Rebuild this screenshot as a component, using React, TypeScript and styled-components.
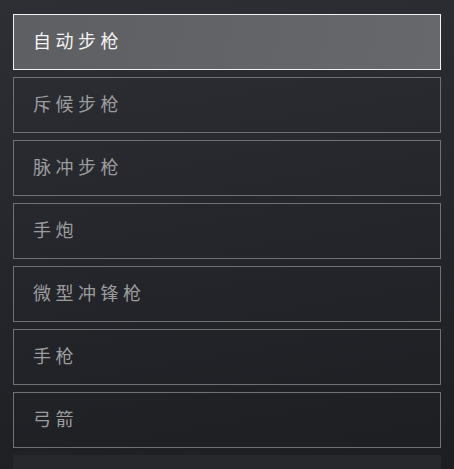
import { createGlobalStyle, styled } from "styled-components";

const weapons = ["自动步枪", "斥候步枪", "脉冲步枪", "手炮", "微型冲锋枪", "手枪", "弓箭"];

const App = () => {
  return (
    <Page>
      <GlobalStyle />
      <List>
        {weapons.map((name, i) => (
          <Item key={name} $active={i === 0}>
            <Label $active={i === 0}>{name}</Label>
          </Item>
        ))}
        <Placeholder />
      </List>
    </Page>
  );
};

export default App;

const GlobalStyle = createGlobalStyle`
  html, body {
    margin: 0;
    padding: 0;
    height: 100%;
    overflow: hidden;
  }
  body {
    font-family: "Noto Sans CJK SC", "Noto Sans", sans-serif;
  }
`;

const Page = styled.div`
  width: 454px;
  height: 469px;
  overflow: hidden;
  background: linear-gradient(170deg, #2e2f35 0%, #25262b 50%, #1d1e22 100%);
`;

const List = styled.div`
  display: flex;
  flex-direction: column;
  gap: 7px;
  padding: 14px 13px 0 13px;
`;

const Item = styled.div<{ $active: boolean }>`
  height: 56px;
  box-sizing: border-box;
  display: flex;
  align-items: center;
  padding: 0 0 4px 19px;
  border: ${(p) => (p.$active ? "1.5px solid #f2f2f2" : "1px solid #717174")};
  background: ${(p) =>
    p.$active ? "linear-gradient(100deg, #5e5f62 0%, #67686b 100%)" : "transparent"};
  flex-shrink: 0;
`;

const Label = styled.span<{ $active: boolean }>`
  font-size: 18px;
  letter-spacing: 4.5px;
  line-height: 1;
  color: ${(p) => (p.$active ? "#f4f4f4" : "#9c9c9e")};
`;

const Placeholder = styled.div`
  height: 40px;
  background: #26282c;
  flex-shrink: 0;
`;
